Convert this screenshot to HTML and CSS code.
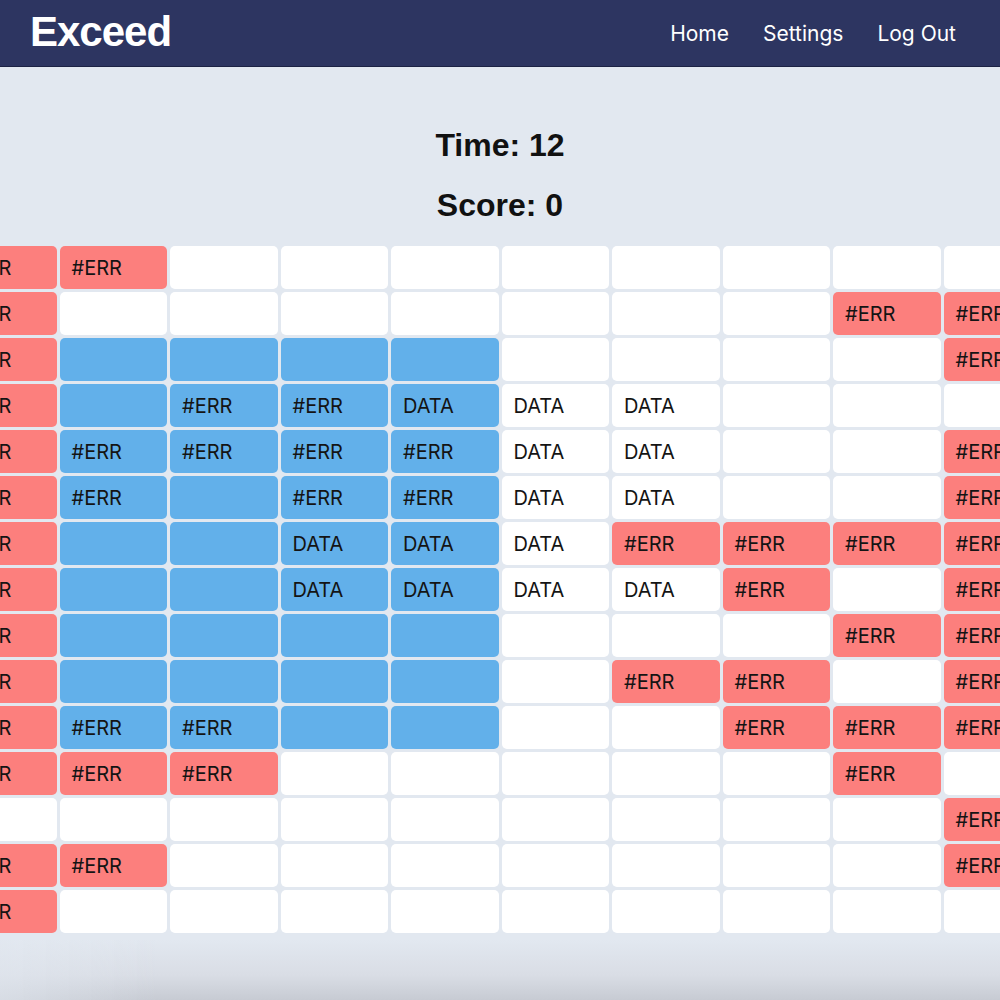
FILE: index.html
```html
<!DOCTYPE html>
<html lang="en">
<head>
<meta charset="utf-8">
<title>Exceed</title>
<link rel="stylesheet" href="styles.css">
</head>
<body>
<header class="topbar">
  <div class="logo">Exceed</div>
  <nav class="nav">
    <a href="#">Home</a>
    <a href="#">Settings</a>
    <a href="#">Log Out</a>
  </nav>
</header>
<main class="game">
  <section class="stats">
    <h2 class="stat">Time: 12</h2>
    <h2 class="stat">Score: 0</h2>
  </section>
  <div class="board-wrap">
    <div class="board">
      <!-- row 1 -->
      <div class="cell err">#ERR</div><div class="cell err">#ERR</div><div class="cell"></div><div class="cell"></div><div class="cell"></div><div class="cell"></div><div class="cell"></div><div class="cell"></div><div class="cell"></div><div class="cell"></div>
      <!-- row 2 -->
      <div class="cell err">#ERR</div><div class="cell"></div><div class="cell"></div><div class="cell"></div><div class="cell"></div><div class="cell"></div><div class="cell"></div><div class="cell"></div><div class="cell err">#ERR</div><div class="cell err">#ERR</div>
      <!-- row 3 -->
      <div class="cell err">#ERR</div><div class="cell sel"></div><div class="cell sel"></div><div class="cell sel"></div><div class="cell sel"></div><div class="cell"></div><div class="cell"></div><div class="cell"></div><div class="cell"></div><div class="cell err">#ERR</div>
      <!-- row 4 -->
      <div class="cell err">#ERR</div><div class="cell sel"></div><div class="cell sel">#ERR</div><div class="cell sel">#ERR</div><div class="cell sel">DATA</div><div class="cell">DATA</div><div class="cell">DATA</div><div class="cell"></div><div class="cell"></div><div class="cell"></div>
      <!-- row 5 -->
      <div class="cell err">#ERR</div><div class="cell sel">#ERR</div><div class="cell sel">#ERR</div><div class="cell sel">#ERR</div><div class="cell sel">#ERR</div><div class="cell">DATA</div><div class="cell">DATA</div><div class="cell"></div><div class="cell"></div><div class="cell err">#ERR</div>
      <!-- row 6 -->
      <div class="cell err">#ERR</div><div class="cell sel">#ERR</div><div class="cell sel"></div><div class="cell sel">#ERR</div><div class="cell sel">#ERR</div><div class="cell">DATA</div><div class="cell">DATA</div><div class="cell"></div><div class="cell"></div><div class="cell err">#ERR</div>
      <!-- row 7 -->
      <div class="cell err">#ERR</div><div class="cell sel"></div><div class="cell sel"></div><div class="cell sel">DATA</div><div class="cell sel">DATA</div><div class="cell">DATA</div><div class="cell err">#ERR</div><div class="cell err">#ERR</div><div class="cell err">#ERR</div><div class="cell err">#ERR</div>
      <!-- row 8 -->
      <div class="cell err">#ERR</div><div class="cell sel"></div><div class="cell sel"></div><div class="cell sel">DATA</div><div class="cell sel">DATA</div><div class="cell">DATA</div><div class="cell">DATA</div><div class="cell err">#ERR</div><div class="cell"></div><div class="cell err">#ERR</div>
      <!-- row 9 -->
      <div class="cell err">#ERR</div><div class="cell sel"></div><div class="cell sel"></div><div class="cell sel"></div><div class="cell sel"></div><div class="cell"></div><div class="cell"></div><div class="cell"></div><div class="cell err">#ERR</div><div class="cell err">#ERR</div>
      <!-- row 10 -->
      <div class="cell err">#ERR</div><div class="cell sel"></div><div class="cell sel"></div><div class="cell sel"></div><div class="cell sel"></div><div class="cell"></div><div class="cell err">#ERR</div><div class="cell err">#ERR</div><div class="cell"></div><div class="cell err">#ERR</div>
      <!-- row 11 -->
      <div class="cell err">#ERR</div><div class="cell sel">#ERR</div><div class="cell sel">#ERR</div><div class="cell sel"></div><div class="cell sel"></div><div class="cell"></div><div class="cell"></div><div class="cell err">#ERR</div><div class="cell err">#ERR</div><div class="cell err">#ERR</div>
      <!-- row 12 -->
      <div class="cell err">#ERR</div><div class="cell err">#ERR</div><div class="cell err">#ERR</div><div class="cell"></div><div class="cell"></div><div class="cell"></div><div class="cell"></div><div class="cell"></div><div class="cell err">#ERR</div><div class="cell"></div>
      <!-- row 13 -->
      <div class="cell"></div><div class="cell"></div><div class="cell"></div><div class="cell"></div><div class="cell"></div><div class="cell"></div><div class="cell"></div><div class="cell"></div><div class="cell"></div><div class="cell err">#ERR</div>
      <!-- row 14 -->
      <div class="cell err">#ERR</div><div class="cell err">#ERR</div><div class="cell"></div><div class="cell"></div><div class="cell"></div><div class="cell"></div><div class="cell"></div><div class="cell"></div><div class="cell"></div><div class="cell err">#ERR</div>
      <!-- row 15 -->
      <div class="cell err">#ERR</div><div class="cell"></div><div class="cell"></div><div class="cell"></div><div class="cell"></div><div class="cell"></div><div class="cell"></div><div class="cell"></div><div class="cell"></div><div class="cell"></div>
    </div>
  </div>
</main>
<div class="vignette"></div>
</body>
</html>
```
FILE: styles.css
```css
html {
  background: #e2e8f0;
}
body {
  margin: 0;
  min-height: 1000px;
  overflow: hidden;
  font-family: Inter, "Noto Sans", sans-serif;
  color: #111;
  background: linear-gradient(to bottom, #e2e8f0 0, #e2e8f0 940px, #d9dde5 975px, #c7cbd3 1000px);
}
.topbar {
  height: 66px;
  border-bottom: 1px solid #1c2244;
  background: #2d3561;
  display: flex;
  align-items: center;
  justify-content: space-between;
  padding: 0 44px 0 30px;
}
.logo {
  font-family: "Liberation Sans", Arial, sans-serif;
  font-weight: 700;
  font-size: 42px;
  letter-spacing: -1px;
  color: #fff;
  line-height: 1;
  margin-top: -2px;
}
.nav {
  display: flex;
  gap: 34px;
}
.nav a {
  color: #fff;
  text-decoration: none;
  font-size: 21px;
  font-family: Inter, sans-serif;
}
.stats {
  padding-top: 48px;
  display: flex;
  flex-direction: column;
  align-items: center;
}
.stat {
  margin: 0;
  font-family: "Liberation Sans", Arial, sans-serif;
  font-weight: 700;
  font-size: 32px;
  line-height: 60px;
  color: #111;
}
.board-wrap {
  margin-top: 11px;
  display: flex;
  justify-content: center;
}
.board {
  flex: 0 0 auto;
  width: 1102px;
  display: grid;
  grid-template-columns: repeat(10, 107.5px);
  grid-auto-rows: 43px;
  gap: 3px;
}
.cell {
  background: #fff;
  border-radius: 5px;
  padding-left: 12px;
  font-size: 20px;
  line-height: 45px;
  color: #141414;
  white-space: nowrap;
  overflow: hidden;
}
.cell.err {
  background: #fc7f7d;
}
.cell.sel {
  background: #62b0ea;
}
.vignette {
  position: fixed;
  left: 0;
  bottom: 0;
  width: 160px;
  height: 60px;
  pointer-events: none;
  background: linear-gradient(to right, rgba(226,232,240,0.6), rgba(226,232,240,0));
}
```
